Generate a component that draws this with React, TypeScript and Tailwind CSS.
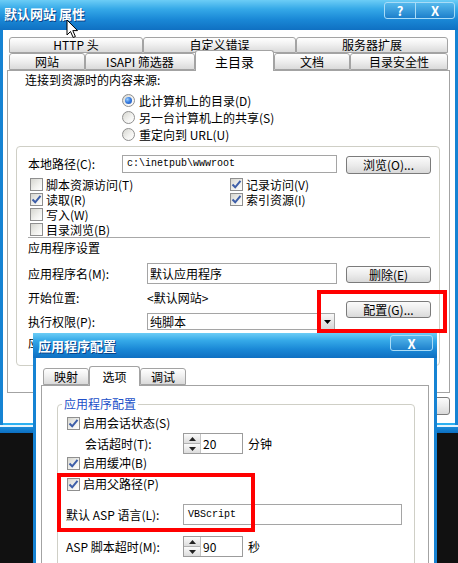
import type { ReactNode } from "react";

const titleGradient =
  "bg-[linear-gradient(to_bottom,#6ccdf6_0%,#35a9e8_30%,#1a88d6_65%,#0f70c2_100%)]";

function Btn({ children, className = "" }: { children: ReactNode; className?: string }) {
  return (
    <div
      className={`flex items-center justify-center rounded-[3px] border border-[#7b7b7b] bg-[linear-gradient(to_bottom,#fbfbfb_0%,#ececec_50%,#d9d9d9_100%)] text-[12px] leading-none text-black ${className}`}
    >
      {children}
    </div>
  );
}

function Check({ checked = false }: { checked?: boolean }) {
  return (
    <div className="flex h-[13px] w-[13px] shrink-0 items-center justify-center border border-[#8f8f8f] bg-[linear-gradient(135deg,#d6d6d0_0%,#f2f2ef_60%,#ffffff_100%)]">
      {checked ? (
        <svg width="11" height="11" viewBox="0 0 11 11">
          <path d="M1.5 5.5 L4.2 8.3 L9.5 1.8" fill="none" stroke="#3d5ea8" strokeWidth="2" />
        </svg>
      ) : null}
    </div>
  );
}

function Radio({ checked = false }: { checked?: boolean }) {
  return (
    <div className="flex h-[13px] w-[13px] shrink-0 items-center justify-center rounded-full border border-[#8f8f8f] bg-[linear-gradient(135deg,#d6d6d0_0%,#f4f4f2_60%,#ffffff_100%)]">
      {checked ? (
        <div className="h-[7px] w-[7px] rounded-full bg-[radial-gradient(circle_at_35%_35%,#9fd0ff_0%,#3a7fe0_45%,#1a4cb8_100%)]" />
      ) : null}
    </div>
  );
}

function Spinner({ value }: { value: string }) {
  return (
    <div className="flex h-[21px] w-[60px] border border-[#9c9c9c] bg-white">
      <div className="flex w-[17px] flex-col border-r border-[#c4c4c4]">
        <div className="flex flex-1 items-center justify-center border-b border-[#b0b0b0] bg-[linear-gradient(to_bottom,#fbfbfb,#dcdcdc)]">
          <svg width="7" height="4" viewBox="0 0 7 4">
            <path d="M0 4 L3.5 0 L7 4 Z" fill="#222" />
          </svg>
        </div>
        <div className="flex flex-1 items-center justify-center bg-[linear-gradient(to_bottom,#fbfbfb,#dcdcdc)]">
          <svg width="7" height="4" viewBox="0 0 7 4">
            <path d="M0 0 L3.5 4 L7 0 Z" fill="#222" />
          </svg>
        </div>
      </div>
      <div className="flex items-center pl-[2px] text-[12px] leading-none">{value}</div>
    </div>
  );
}

function Tab({
  label,
  width,
  selected = false,
  className = "",
}: {
  label: string;
  width: string;
  selected?: boolean;
  className?: string;
}) {
  return (
    <div
      className={`flex shrink-0 items-center justify-center rounded-t-[3px] border border-[#a3a3a3] text-[12px] leading-none ${width} ${
        selected
          ? "relative z-10 -mb-px border-b-0 bg-white"
          : "bg-[linear-gradient(to_bottom,#ffffff_0%,#f0f0f0_45%,#dadada_100%)]"
      } ${className}`}
    >
      {label}
    </div>
  );
}

function Cursor() {
  return (
    <svg className="absolute left-[66px] top-[19px]" width="13" height="20" viewBox="0 0 13 20">
      <path
        d="M1 1 L1 16 L4.5 12.5 L7.2 18.5 L9.4 17.5 L6.8 11.6 L11.5 11.6 Z"
        fill="#fff"
        stroke="#000"
        strokeWidth="1"
        strokeLinejoin="round"
      />
    </svg>
  );
}

function MainDialog() {
  return (
    <div className="flex h-[433px] w-[458px] flex-col bg-[#1683d3]">
      <div className={`flex h-[30px] shrink-0 items-start justify-between ${titleGradient}`}>
        <div className="pl-[4px] pt-[7px] text-[13px] font-bold leading-none text-white [text-shadow:1px_1px_0_#0a4488]">
          默认网站 属性
        </div>
        <div className="mr-[3px] mt-[2px] flex h-[17px] overflow-hidden rounded-[3px] border border-[#a9dcf7] bg-[linear-gradient(to_bottom,#55b8ec,#1d80cc)]">
          <div className="flex w-[31px] items-center justify-center border-r border-[#a9dcf7] text-[13px] font-bold leading-none text-white">
            ?
          </div>
          <div className="flex w-[38px] items-center justify-center text-[13px] font-bold leading-none text-white">
            X
          </div>
        </div>
      </div>

      <div className="mx-[3px] flex flex-1 flex-col bg-white pl-[4px] pr-[5px] pt-[7px]">
        <div className="flex pl-[2px]">
          <Tab label="HTTP 头" width="w-[134px]" className="h-[16px]" />
          <Tab label="自定义错误" width="w-[153px]" className="h-[16px]" />
          <Tab label="服务器扩展" width="w-[152px]" className="h-[16px]" />
        </div>
        <div className="flex h-[17px] items-end pl-[2px]">
          <Tab label="网站" width="w-[76px]" className="h-[17px]" />
          <Tab label="ISAPI 筛选器" width="w-[110px]" className="h-[17px]" />
          <Tab label="主目录" width="w-[79px]" selected className="h-[21px] text-[13px]" />
          <Tab label="文档" width="w-[76px]" className="h-[17px]" />
          <Tab label="目录安全性" width="w-[98px]" className="h-[17px]" />
        </div>

        <div className="flex h-[323px] flex-col border border-[#a3a3a3] bg-white">
          <div className="mt-[1px] flex h-[16px] items-center pl-[17px] leading-none">连接到资源时的内容来源:</div>
          <div className="mt-[4px] flex flex-col pl-[114px]">
            <div className="flex h-[17px] items-center gap-[4px] leading-none">
              <Radio checked />
              此计算机上的目录(D)
            </div>
            <div className="flex h-[17px] items-center gap-[4px] leading-none">
              <Radio />
              另一台计算机上的共享(S)
            </div>
            <div className="flex h-[17px] items-center gap-[4px] leading-none">
              <Radio />
              重定向到 URL(U)
            </div>
          </div>

          <fieldset className="ml-[8px] mt-[3px] h-[220px] w-[424px] rounded-[4px] border border-[#cfcfc6]">
            <div className="mt-[8px] flex h-[19px] items-start pl-[11px]">
              <div className="flex h-[18px] w-[94px] items-center leading-none">本地路径(C):</div>
              <div className="flex h-[18px] w-[215px] items-center border border-[#a5a5a5] pl-[4px] font-['Liberation_Mono',monospace] text-[10px] leading-none">
                c:\inetpub\wwwroot
              </div>
              <Btn className="ml-[9px] mt-[1px] h-[18px] w-[85px]">浏览(O)...</Btn>
            </div>

            <div className="mt-[3px] grid grid-cols-[200px_1fr] pl-[13px]">
              <div className="flex h-[15px] items-center gap-[3px] leading-none">
                <Check />
                脚本资源访问(T)
              </div>
              <div className="flex h-[15px] items-center gap-[3px] leading-none">
                <Check checked />
                记录访问(V)
              </div>
              <div className="flex h-[15px] items-center gap-[3px] leading-none">
                <Check checked />
                读取(R)
              </div>
              <div className="flex h-[15px] items-center gap-[3px] leading-none">
                <Check checked />
                索引资源(I)
              </div>
              <div className="flex h-[15px] items-center gap-[3px] leading-none">
                <Check />
                写入(W)
              </div>
              <div />
              <div className="flex h-[15px] items-center gap-[3px] leading-none">
                <Check />
                目录浏览(B)
              </div>
              <div />
            </div>

            <div className="ml-[11px] mr-[9px] h-px bg-[#a8a8a8]" />

            <div className="mt-[2px] flex h-[16px] items-center pl-[11px] leading-none">应用程序设置</div>

            <div className="mt-[7px] flex pl-[11px]">
              <div className="flex w-[309px] flex-col">
                <div className="flex h-[21px] items-center">
                  <div className="w-[119px] leading-none">应用程序名(M):</div>
                  <div className="flex h-[21px] flex-1 items-center border border-[#a5a5a5] pl-[2px] leading-none">
                    默认应用程序
                  </div>
                </div>
                <div className="mt-[6px] flex h-[16px] items-center leading-none">
                  <div className="w-[119px]">开始位置:</div>
                  <div>&lt;默认网站&gt;</div>
                </div>
                <div className="mt-[7px] flex h-[17px] items-center">
                  <div className="w-[119px] leading-none">执行权限(P):</div>
                  <div className="flex h-[17px] w-[188px] items-center justify-between border border-[#a5a5a5] pl-[2px] leading-none">
                    纯脚本
                    <div className="flex h-[15px] w-[14px] items-center justify-center border-l border-[#b0b0b0] bg-[linear-gradient(to_bottom,#f8f8f8,#d6d6d6)]">
                      <svg width="7" height="4" viewBox="0 0 7 4">
                        <path d="M0 0 L3.5 4 L7 0 Z" fill="#000" />
                      </svg>
                    </div>
                  </div>
                </div>
              </div>
              <div className="ml-[9px] flex flex-col">
                <Btn className="mt-[3px] h-[17px] w-[85px]">删除(E)</Btn>
                <Btn className="mt-[18px] h-[17px] w-[85px]">配置(G)...</Btn>
              </div>
            </div>

            <div className="mt-[5px] flex h-[16px] items-center pl-[11px] leading-none">应用程序保护(N):</div>
          </fieldset>
        </div>

        <div className="mt-[4px] flex justify-end">
          <Btn className="h-[18px] w-[75px]">帮助</Btn>
        </div>
      </div>
      <div className="mx-[3px] h-[2px] bg-[#2cb0f0]" />
      <div className="h-[8px] bg-[linear-gradient(to_bottom,#e6f5fd_0px,#e6f5fd_2px,#1a8ad8_2px,#0c6fc2_100%)]" />
    </div>
  );
}

function ConfigDialog() {
  return (
    <div className="absolute left-[33px] top-[333px] flex h-[240px] w-[404px] flex-col bg-[#1683d3]">
      <div className={`flex h-[25px] shrink-0 items-start justify-between ${titleGradient}`}>
        <div className="pl-[5px] pt-[6px] text-[13px] font-bold leading-none text-white [text-shadow:1px_1px_0_#0a4488]">
          应用程序配置
        </div>
        <div className="mr-[4px] mt-[2px] flex h-[16px] w-[43px] items-center justify-center rounded-[3px] border border-[#a9dcf7] bg-[linear-gradient(to_bottom,#55b8ec,#1d80cc)] text-[13px] font-bold leading-none text-white">
          X
        </div>
      </div>
      <div className="mx-[3px] flex flex-1 flex-col bg-white pt-[7px]">
        <div className="flex h-[20px] items-end pl-[7px]">
          <Tab label="映射" width="w-[46px]" className="h-[17px]" />
          <Tab label="选项" width="w-[51px]" selected className="h-[20px]" />
          <Tab label="调试" width="w-[46px]" className="h-[17px]" />
        </div>
        <div className="ml-[5px] flex w-[388px] flex-1 flex-col border border-[#a3a3a3]">
          <fieldset className="ml-[15px] mt-[11px] h-[200px] w-[358px] rounded-[4px] border border-[#cfcfc6]">
            <legend className="ml-[4px] px-[2px] text-[12px] leading-[14px] text-[#2150c8]">应用程序配置</legend>
            <div className="mt-[5px] flex h-[14px] items-center gap-[3px] pl-[9px] leading-none">
              <Check checked />
              启用会话状态(S)
            </div>
            <div className="mt-[3px] flex h-[21px] items-center">
              <div className="w-[125px] pl-[27px] leading-none">会话超时(T):</div>
              <Spinner value="20" />
              <div className="ml-[5px] leading-none">分钟</div>
            </div>
            <div className="mt-[2px] flex h-[14px] items-center gap-[3px] pl-[9px] leading-none">
              <Check checked />
              启用缓冲(B)
            </div>
            <div className="mt-[7px] flex h-[14px] items-center gap-[3px] pl-[9px] leading-none">
              <Check checked />
              启用父路径(P)
            </div>
            <div className="mt-[13px] flex h-[21px] items-center">
              <div className="w-[125px] pl-[8px] leading-none">默认 ASP 语言(L):</div>
              <div className="flex h-[21px] w-[219px] items-center border border-[#a5a5a5] pl-[4px] font-['Liberation_Mono',monospace] text-[10px] leading-none">
                VBScript
              </div>
            </div>
            <div className="mt-[11px] flex h-[21px] items-center">
              <div className="w-[125px] pl-[8px] leading-none">ASP 脚本超时(M):</div>
              <Spinner value="90" />
              <div className="ml-[5px] leading-none">秒</div>
            </div>
          </fieldset>
        </div>
      </div>
    </div>
  );
}

export default function App() {
  return (
    <div className="relative h-[563px] w-[458px] overflow-hidden bg-[#111111] font-['Noto_Sans_CJK_SC',sans-serif] text-[12px] text-black">
      <MainDialog />
      <ConfigDialog />
      <div className="pointer-events-none absolute left-[317px] top-[290px] h-[43px] w-[130px] border-[4px] border-[#f00]" />
      <div className="pointer-events-none absolute left-[57px] top-[473px] h-[59px] w-[198px] border-[4px] border-[#f00]" />
      <Cursor />
    </div>
  );
}
